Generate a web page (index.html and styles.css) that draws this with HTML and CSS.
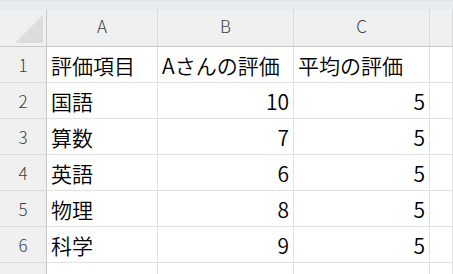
FILE: index.html
```html
<!DOCTYPE html>
<html lang="ja">
<head>
  <meta charset="UTF-8" />
  <title>評価シート</title>
  <link rel="stylesheet" href="styles.css">
</head>
<body>

  <div class="ribbon"></div>

  <div class="sheet">
    <div class="corner"><span class="corner-mark"></span></div>
    <div class="col-head">A</div>
    <div class="col-head">B</div>
    <div class="col-head">C</div>
    <div class="col-head"></div>

    <div class="row-head">1</div>
    <div class="cell">評価項目</div>
    <div class="cell">Aさんの評価</div>
    <div class="cell">平均の評価</div>
    <div class="cell"></div>

    <div class="row-head">2</div>
    <div class="cell">国語</div>
    <div class="cell num">10</div>
    <div class="cell num">5</div>
    <div class="cell"></div>

    <div class="row-head">3</div>
    <div class="cell">算数</div>
    <div class="cell num">7</div>
    <div class="cell num">5</div>
    <div class="cell"></div>

    <div class="row-head">4</div>
    <div class="cell">英語</div>
    <div class="cell num">6</div>
    <div class="cell num">5</div>
    <div class="cell"></div>

    <div class="row-head">5</div>
    <div class="cell">物理</div>
    <div class="cell num">8</div>
    <div class="cell num">5</div>
    <div class="cell"></div>

    <div class="row-head">6</div>
    <div class="cell">科学</div>
    <div class="cell num">9</div>
    <div class="cell num">5</div>
    <div class="cell"></div>

    <div class="row-head last"></div>
    <div class="cell last"></div>
    <div class="cell last"></div>
    <div class="cell last"></div>
    <div class="cell last"></div>
  </div>

</body>
</html>
```

FILE: styles.css
```css
body {
  margin: 0;
  height: 274px;
  background-color: #ffffff;
  font-family: "Noto Sans CJK JP", "Noto Sans", sans-serif;
  overflow: hidden;
}

.ribbon {
  height: 10px;
  background-color: #e6ebef;
  border-top: 1px solid #dde2e6;
  box-sizing: border-box;
}

.sheet {
  display: grid;
  grid-template-columns: 47px 111px 136px 136px 1fr;
  grid-template-rows: 37px repeat(6, 36px) 11px;
}

.corner,
.col-head,
.row-head {
  background-color: #f0f0f0;
  color: #3b3f48;
  font-size: 17px;
  font-weight: 300;
  display: flex;
  align-items: center;
  justify-content: center;
}

.corner {
  border-right: 1px solid #c8c8c8;
  border-bottom: 1px solid #c8c8c8;
  position: relative;
}

/* select-all triangle in the corner */
.corner-mark {
  position: absolute;
  right: 3px;
  bottom: 3px;
  width: 28px;
  height: 28px;
  background-color: #dcdcdc;
  clip-path: polygon(100% 0, 100% 100%, 0 100%);
}

.col-head {
  border-right: 1px solid #dadada;
  border-bottom: 1px solid #c8c8c8;
  padding-bottom: 6px;
}

.row-head {
  border-right: 1px solid #c8c8c8;
  border-bottom: 1px solid #dadada;
}

.cell {
  border-right: 1px solid #e1e1e1;
  border-bottom: 1px solid #e1e1e1;
  font-size: 21px;
  font-weight: 350;
  color: #000000;
  display: flex;
  align-items: center;
  padding: 0 4px;
  white-space: nowrap;
}

.num {
  justify-content: flex-end;
}

.last {
  border-bottom: none;
}
```
